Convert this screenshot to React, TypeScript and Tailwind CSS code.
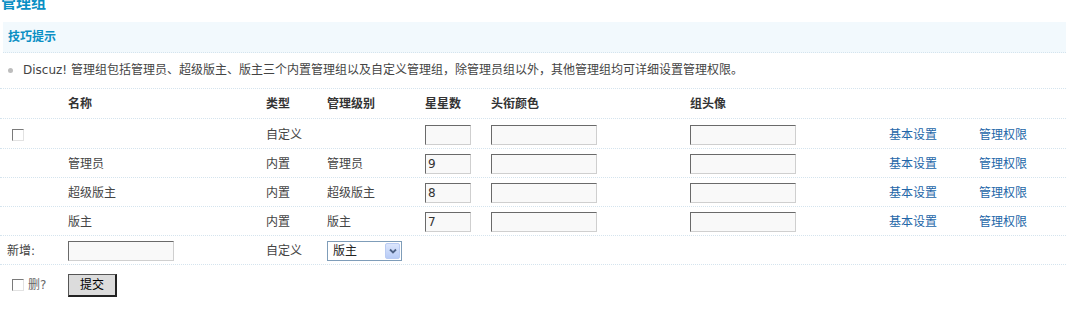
import React from "react";

const Cb = () => (
  <div className="w-[12px] h-[12px] bg-white border border-t-[#7a7a7a] border-l-[#7a7a7a] border-r-[#e2e2e2] border-b-[#e2e2e2]" />
);

const Inp = ({ w, v }: { w: string; v?: string }) => (
  <div
    className={`${w} h-[20px] bg-[#f9f9f9] border border-t-[#6a6a6a] border-l-[#6a6a6a] border-r-[#cfcfcf] border-b-[#cfcfcf] pl-[2px] flex items-center text-[12px] text-[#333]`}
  >
    {v}
  </div>
);

const Link = ({ children }: { children: React.ReactNode }) => (
  <span className="text-[#2366a8]">{children}</span>
);

type Row = { cb?: boolean; name: string; type: string; level: string; stars: string };
const rows: Row[] = [
  { cb: true, name: "", type: "自定义", level: "", stars: "" },
  { name: "管理员", type: "内置", level: "管理员", stars: "9" },
  { name: "超级版主", type: "内置", level: "超级版主", stars: "8" },
  { name: "版主", type: "内置", level: "版主", stars: "7" },
];

export default function App() {
  return (
    <div className="w-[1066px] h-[310px] overflow-hidden bg-white text-[12px] text-[#333] font-['DejaVu_Sans','Noto_Sans_CJK_SC',sans-serif]">
      <h3 className="-mt-[4px] h-[26px] text-[15px] leading-[15px] font-bold text-[#0a8fc4] pl-[1px]">管理组</h3>
      <div className="ml-[3px] h-[31px] bg-[#f2f9fd] border-b border-dotted border-[#d5e4ee] flex items-center pl-[5px]">
        <span className="font-bold text-[#0a8fc4] text-[12px]">技巧提示</span>
      </div>
      <div className="h-[35px] flex items-center pl-[8px] pb-[1px]">
        <span className="w-[5px] h-[5px] rounded-full bg-[#bdbdbd] mr-[10px]" />
        <span className="text-[#444]">Discuz! 管理组包括管理员、超级版主、版主三个内置管理组以及自定义管理组，除管理员组以外，其他管理组均可详细设置管理权限。</span>
      </div>
      {/* header */}
      <div className="h-[31px] flex items-center border-t border-b border-dotted border-[#d5e4ee] font-bold text-[#333]">
        <div className="w-[68px]" />
        <div className="w-[198px]">名称</div>
        <div className="w-[61px]">类型</div>
        <div className="w-[98px]">管理级别</div>
        <div className="w-[66px]">星星数</div>
        <div className="w-[199px]">头衔颜色</div>
        <div className="w-[199px]">组头像</div>
        <div className="w-[90px]" />
        <div className="flex-1" />
      </div>
      {rows.map((r, i) => (
        <div
          key={i}
          className={`${i === 0 ? "h-[30px]" : "h-[29px]"} flex items-center pt-[2px] border-b border-dotted border-[#d5e4ee] text-[#444]`}
        >
          <div className="w-[68px] pl-[12px]">{r.cb && <Cb />}</div>
          <div className="w-[198px]">{r.name}</div>
          <div className="w-[61px]">{r.type}</div>
          <div className="w-[98px]">{r.level}</div>
          <div className="w-[66px]"><Inp w="w-[46px]" v={r.stars} /></div>
          <div className="w-[199px]"><Inp w="w-[106px]" /></div>
          <div className="w-[199px]"><Inp w="w-[106px]" /></div>
          <div className="w-[90px]"><Link>基本设置</Link></div>
          <div className="flex-1"><Link>管理权限</Link></div>
        </div>
      ))}
      {/* new row */}
      <div className="h-[29px] flex items-center pt-[2px] border-b border-dotted border-[#d5e4ee] text-[#444]">
        <div className="w-[68px] pl-[7px]">新增:</div>
        <div className="w-[198px]"><Inp w="w-[106px]" /></div>
        <div className="w-[61px]">自定义</div>
        <div className="w-[98px]">
          <div className="w-[75px] h-[20px] border border-[#7f9db9] bg-white flex items-center relative">
            <span className="pl-[5px] text-[#222]">版主</span>
            <div className="absolute right-[1px] top-[1px] bottom-[1px] w-[15px] rounded-[2px] border border-[#b9cbf3] bg-[linear-gradient(#dce6fd,#b7cbf6)] flex items-center justify-center">
              <svg width="8" height="6" viewBox="0 0 8 6">
                <path d="M1 1.5 L4 4.5 L7 1.5" stroke="#4d6185" strokeWidth="1.8" fill="none" />
              </svg>
            </div>
          </div>
        </div>
        <div className="flex-1" />
      </div>
      {/* submit row */}
      <div className="h-[40px] flex items-center">
        <div className="w-[68px] pl-[12px] flex items-center gap-[4px]">
          <Cb />
          <span className="text-[#666]">删?</span>
        </div>
        <div className="w-[49px] h-[23px] bg-[#dcdcdc] border-t border-l border-r-2 border-b-2 border-t-[#555] border-l-[#555] border-r-[#222] border-b-[#222] flex items-center justify-center text-black">
          提交
        </div>
      </div>
    </div>
  );
}
